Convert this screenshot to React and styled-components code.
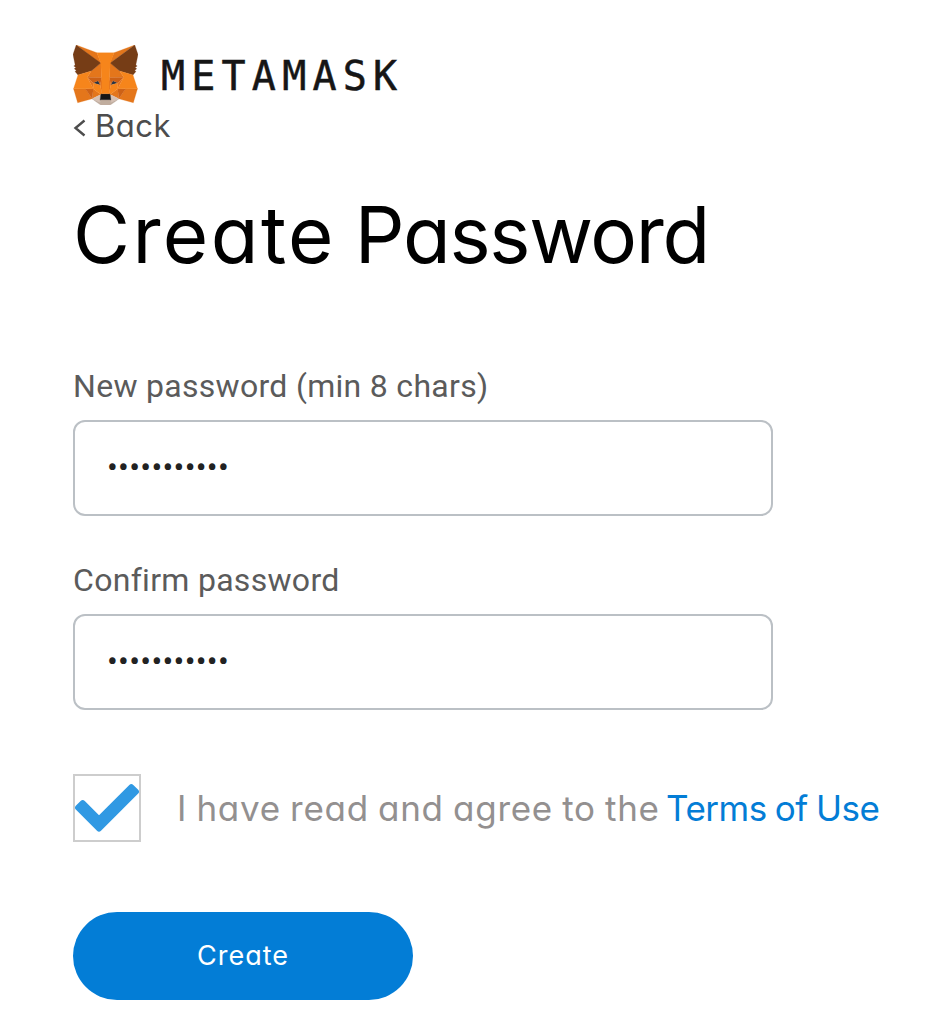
import React from "react";
import styled, { createGlobalStyle } from "styled-components";

const GlobalStyle = createGlobalStyle`
  *, *::before, *::after { box-sizing: border-box; }
  body { margin: 0; background: #fff; }
`;

const geometric = `Inter, Lato, "Liberation Sans", sans-serif`;

const Page = styled.main`
  display: flex;
  flex-direction: column;
  align-items: flex-start;
  min-height: 1030px;
  padding: 45px 0 0 73px;
  font-family: ${geometric};
  font-feature-settings: "cv11" 1;
  white-space: nowrap;
`;

const Brand = styled.header`
  display: flex;
  align-items: center;
  gap: 23px;
  height: 60px;
`;

const Fox = styled.svg`
  display: block;
  width: 65px;
  height: 60px;
`;

const Wordmark = styled.span`
  padding-top: 2px;
  font: 400 40px/60px "DejaVu Sans Mono", monospace;
  letter-spacing: 6.2px;
  color: #161616;
  -webkit-text-stroke: 0.5px #161616;
`;

const BackLink = styled.a`
  display: flex;
  align-items: center;
  gap: 8px;
  height: 42px;
  font-size: 31px;
  line-height: 42px;
  letter-spacing: 0.5px;
  color: #4d4d4d;
`;

const Chevron = styled.svg`
  display: block;
  width: 14px;
  height: 18px;
  margin-top: 3px;
`;

const Title = styled.h1`
  margin: 40px 0 0;
  font-size: 78px;
  line-height: 96px;
  font-weight: 400;
  word-spacing: -3px;
  color: #000;
`;

const TitleWord = styled.span`
  letter-spacing: ${(p) => p.$tracking}px;
`;

const Field = styled.label`
  display: flex;
  flex-direction: column;
  gap: 14px;
  margin-top: ${(p) => p.$top}px;
`;

const FieldLabel = styled.span`
  font: 400 32px/40px Roboto, sans-serif;
  letter-spacing: 0.3px;
  color: #5b5b5b;
`;

const PasswordInput = styled.input`
  width: 700px;
  height: 96px;
  padding: 0 32px 2px;
  border: 2px solid #bbc0c5;
  border-radius: 12px;
  outline: none;
  background: #fff;
  font: 400 32px/40px Roboto, sans-serif;
  letter-spacing: 0.3px;
  color: #222;
`;

const Agreement = styled.div`
  display: flex;
  align-items: center;
  margin-top: 64px;
`;

const Checkbox = styled.span`
  display: flex;
  width: 68px;
  height: 68px;
  border: 2px solid #cdcdcd;
`;

const AgreementText = styled.span`
  margin-left: 36px;
  font-size: 35px;
  line-height: 44px;
  letter-spacing: 0.7px;
  word-spacing: -1.2px;
  color: #939090;
`;

const TermsLink = styled.a`
  margin-left: -3px;
  letter-spacing: -0.5px;
  color: #037dd6;
`;

const CreateButton = styled.button`
  width: 340px;
  height: 88px;
  margin-top: 70px;
  padding: 0;
  border: 0;
  border-radius: 44px;
  background: #037dd6;
  color: #fff;
  font: 400 27px/40px ${geometric};
  font-feature-settings: "cv11" 1;
  letter-spacing: 1px;
`;

const foxFacets = [
  ["#e2761b", "274.1 35.5 174.6 109.4 193 65.8"],
  ["#e4761b", "44.4 35.5 143.1 110.1 125.6 65.8"],
  ["#e4761b", "238.3 206.8 211.8 247.4 268.5 263 284.8 207.7"],
  ["#e4761b", "33.9 207.7 50.1 263 106.8 247.4 80.3 206.8"],
  ["#e4761b", "103.6 138.2 87.8 162.1 144.1 164.6 142.1 104.1"],
  ["#e4761b", "214.9 138.2 175.9 103.4 174.6 164.6 230.8 162.1"],
  ["#e4761b", "106.8 247.4 140.6 230.9 111.4 208.1"],
  ["#e4761b", "177.9 230.9 211.8 247.4 207.1 208.1"],
  ["#d7c1b3", "211.8 247.4 177.9 230.9 180.6 253 180.3 262.3"],
  ["#d7c1b3", "106.8 247.4 138.3 262.3 138.1 253 140.6 230.9"],
  ["#233447", "138.8 193.5 110.6 185.2 130.5 176.1"],
  ["#233447", "179.7 193.5 188 176.1 208 185.2"],
  ["#cd6116", "106.8 247.4 111.6 206.8 80.3 207.7"],
  ["#cd6116", "207 206.8 211.8 247.4 238.3 207.7"],
  ["#cd6116", "230.8 162.1 174.6 164.6 179.8 193.5 188.1 176.1 208.1 185.2"],
  ["#cd6116", "110.6 185.2 130.6 176.1 138.8 193.5 144.1 164.6 87.8 162.1"],
  ["#e4751f", "87.8 162.1 111.4 208.1 110.6 185.2"],
  ["#e4751f", "208.1 185.2 207.1 208.1 230.8 162.1"],
  ["#e4751f", "144.1 164.6 138.8 193.5 145.4 227.6 146.9 182.7"],
  ["#e4751f", "174.6 164.6 171.9 182.6 173.1 227.6 179.8 193.5"],
  ["#f6851b", "179.8 193.5 173.1 227.6 177.9 230.9 207.1 208.1 208.1 185.2"],
  ["#f6851b", "110.6 185.2 111.4 208.1 140.6 230.9 145.4 227.6 138.8 193.5"],
  ["#c0ad9e", "180.3 262.3 180.6 253 178.1 250.8 140.4 250.8 138.1 253 138.3 262.3 106.8 247.4 117.8 256.4 140.1 271.9 178.4 271.9 200.8 256.4 211.8 247.4"],
  ["#161616", "177.9 230.9 173.1 227.6 145.4 227.6 140.6 230.9 138.1 253 140.4 250.8 178.1 250.8 180.6 253"],
  ["#763d16", "278.3 114.2 286.8 73.4 274.1 35.5 177.9 106.9 214.9 138.2 267.2 153.5 278.8 140 273.8 136.4 281.8 129.1 275.6 124.3 283.6 118.2"],
  ["#763d16", "31.8 73.4 40.3 114.2 34.9 118.2 42.9 124.3 36.8 129.1 44.8 136.4 39.8 140 51.3 153.5 103.6 138.2 140.6 106.9 44.4 35.5"],
  ["#f6851b", "267.2 153.5 214.9 138.2 230.8 162.1 207.1 208.1 238.3 207.7 284.8 207.7"],
  ["#f6851b", "103.6 138.2 51.3 153.5 33.9 207.7 80.3 207.7 111.4 208.1 87.8 162.1"],
  ["#f6851b", "174.6 164.6 177.9 106.9 193.1 65.8 125.6 65.8 140.6 106.9 144.1 164.6 145.3 182.8 145.4 227.6 173.1 227.6 173.3 182.8"],
];

function FoxLogo() {
  return (
    <Fox viewBox="31.8 35.5 255 236.4" preserveAspectRatio="none" aria-hidden="true">
      {foxFacets.map(([color, points]) => (
        <polygon key={points} points={points} fill={color} stroke={color} strokeWidth="1" strokeLinejoin="round" />
      ))}
    </Fox>
  );
}

export default function App() {
  return (
    <>
      <GlobalStyle />
      <Page>
        <Brand>
          <FoxLogo />
          <Wordmark>METAMASK</Wordmark>
        </Brand>
        <BackLink>
          <Chevron viewBox="0 0 14 18" aria-hidden="true">
            <path d="M11.5 1.5 2.5 9l9 7.5" fill="none" stroke="#4d4d4d" strokeWidth="2.4" />
          </Chevron>
          Back
        </BackLink>
        <Title>
          <TitleWord $tracking={2.4}>Create</TitleWord>{" "}
          <TitleWord $tracking={-1.3}>Password</TitleWord>
        </Title>
        <Field $top={83}>
          <FieldLabel>New password (min 8 chars)</FieldLabel>
          <PasswordInput type="password" defaultValue="password123" />
        </Field>
        <Field $top={44}>
          <FieldLabel>Confirm password</FieldLabel>
          <PasswordInput type="password" defaultValue="password123" />
        </Field>
        <Agreement>
          <Checkbox role="checkbox" aria-checked="true">
            <svg width="64" height="64" viewBox="0 0 64 64" aria-hidden="true">
              <path
                d="M.8 29.8 5.6 25Q7.7 23 9.8 25L24 39.2 54.3 8.9Q56.3 7 58.3 8.9L63.2 13.8Q65 15.7 63.2 17.6L26 54.8Q24 56.6 22 54.8L.8 33.6Q-1 31.7 .8 29.8Z"
                fill="#3099e3"
              />
            </svg>
          </Checkbox>
          <AgreementText>
            I have read and agree to the <TermsLink>Terms of Use</TermsLink>
          </AgreementText>
        </Agreement>
        <CreateButton type="button">Create</CreateButton>
      </Page>
    </>
  );
}
